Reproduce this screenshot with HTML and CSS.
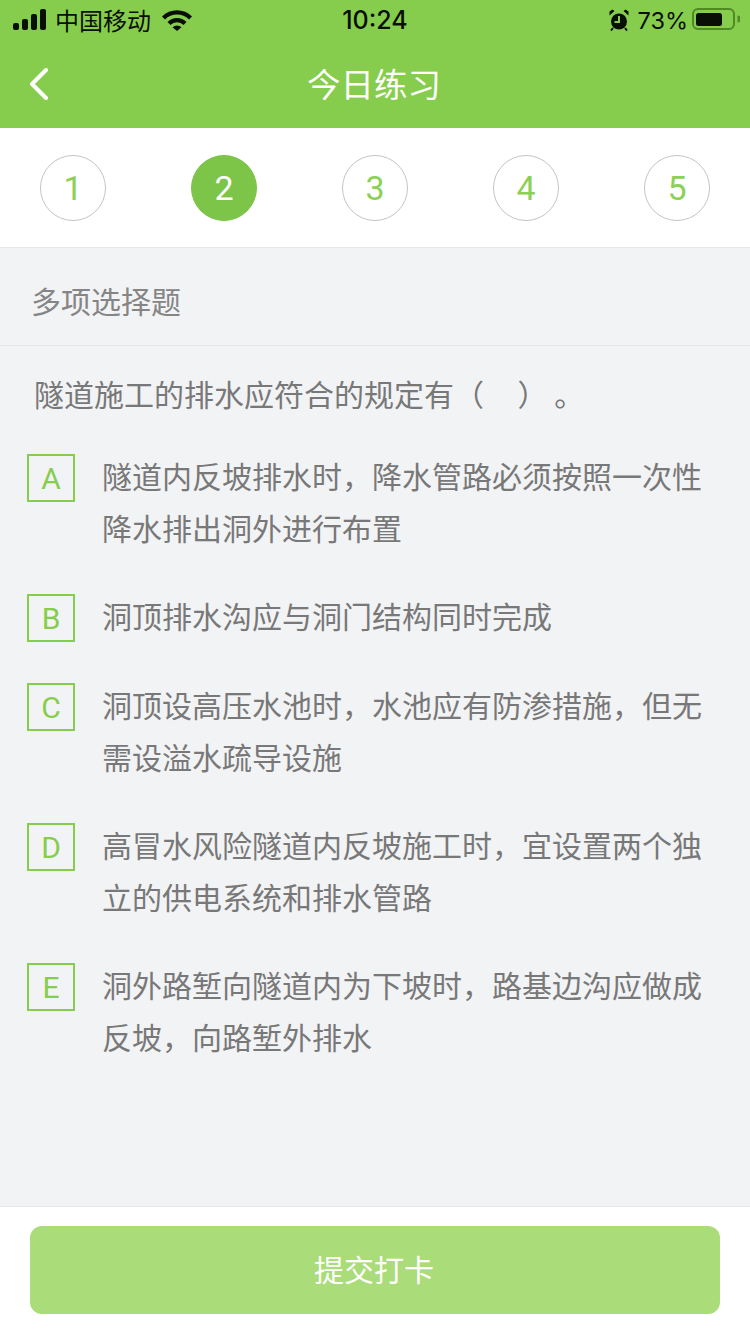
FILE: index.html
```html
<!DOCTYPE html>
<html lang="zh-CN">
<head>
    <meta charset="UTF-8">
    <title>今日练习</title>
    <meta name="viewport" content="width=device-width, initial-scale=1">
    <link rel="stylesheet" href="styles.css">
</head>
<body>
<div class="page">
    <header class="top">
        <div class="status">
            <div class="status-left">
                <svg class="signal" width="34" height="22" viewBox="0 0 34 22">
                    <rect x="0" y="14" width="6" height="7" rx="2"/>
                    <rect x="9" y="10" width="6" height="11" rx="2"/>
                    <rect x="18" y="5" width="6" height="16" rx="2"/>
                    <rect x="27" y="0" width="6" height="21" rx="2"/>
                </svg>
                <span class="carrier">中国移动</span>
                <svg class="wifi" width="30" height="22" viewBox="0 0 30 22">
                    <path d="M0 7.500a21 21 0 0 1 30 0l-3 3a17 17 0 0 0-24 0z"/>
                    <path d="M5.500 13a13.500 13.500 0 0 1 19 0l-3 3a9.300 9.300 0 0 0-13 0z"/>
                    <path d="M10.500 18.300a6.300 6.300 0 0 1 9 0l-4.500 3.700z"/>
                </svg>
            </div>
            <div class="status-time">10:24</div>
            <div class="status-right">
                <svg class="alarm" width="20" height="22" viewBox="0 0 20 22">
                    <circle cx="10" cy="12.500" r="8"/>
                    <path d="M0.500 6.500 5.500 2 3.500 0.500 0.500 2.500z M19.500 6.500 14.500 2 16.500 0.500 19.500 2.500z"/>
                    <path d="M4 19 2 21.500 M16 19 18 21.500" class="alarm-foot"/>
                    <path class="alarm-hand" d="M10 7V13H5.500"/>
                </svg>
                <span class="percent">73%</span>
                <svg class="battery" width="49" height="24" viewBox="0 0 49 24">
                    <rect class="battery-shell" x="2" y="1" width="41" height="20" rx="5"/>
                    <rect x="5" y="5" width="26" height="13" rx="2.500"/>
                    <path class="battery-cap" d="M46.500 7.500a3.500 3.500 0 0 1 0 7z"/>
                </svg>
            </div>
        </div>
        <div class="nav">
            <svg class="back" width="20" height="32" viewBox="0 0 20 32">
                <path d="M17 2 3 16 17 30"/>
            </svg>
            <h1>今日练习</h1>
        </div>
    </header>

    <div class="steps">
        <div class="step">1</div>
        <div class="step active">2</div>
        <div class="step">3</div>
        <div class="step">4</div>
        <div class="step">5</div>
    </div>

    <main class="content">
        <div class="qtype">多项选择题</div>
        <p class="question">隧道施工的排水应符合的规定有（&nbsp;&nbsp;&nbsp;&nbsp;&nbsp;）&nbsp;。</p>
        <div class="options">
            <div class="option">
                <div class="letter">A</div>
                <div class="text">隧道内反坡排水时，降水管路必须按照一次性降水排出洞外进行布置</div>
            </div>
            <div class="option">
                <div class="letter">B</div>
                <div class="text">洞顶排水沟应与洞门结构同时完成</div>
            </div>
            <div class="option">
                <div class="letter">C</div>
                <div class="text">洞顶设高压水池时，水池应有防渗措施，但无需设溢水疏导设施</div>
            </div>
            <div class="option">
                <div class="letter">D</div>
                <div class="text">高冒水风险隧道内反坡施工时，宜设置两个独立的供电系统和排水管路</div>
            </div>
            <div class="option">
                <div class="letter">E</div>
                <div class="text">洞外路堑向隧道内为下坡时，路基边沟应做成反坡，向路堑外排水</div>
            </div>
        </div>
    </main>

    <footer class="bottom">
        <button class="submit">提交打卡</button>
    </footer>
</div>
</body>
</html>
```

FILE: styles.css
```css
* {
    box-sizing: border-box;
}

html, body {
    margin: 0;
    padding: 0;
}

body {
    font-family: "Noto Sans CJK SC", "Liberation Sans", sans-serif;
    background: #f2f3f5;
}

.page {
    width: 750px;
    height: 1334px;
    display: flex;
    flex-direction: column;
    overflow: hidden;
}

.top {
    height: 128px;
    background: #87cd4d;
    flex: none;
}

.status {
    height: 40px;
    display: grid;
    grid-template-columns: 1fr auto 1fr;
    align-items: center;
    padding: 0 13px;
    color: #0a0f05;
}

.status-left, .status-right {
    display: flex;
    align-items: center;
}

.status-right {
    justify-content: flex-end;
}

.signal {
    fill: #0a0f05;
}

.carrier {
    font-size: 24px;
    margin-left: 8px;
    line-height: 30px;
}

.wifi {
    fill: #0a0f05;
    margin-left: 11px;
}

.status-time {
    font-family: Inter, "Liberation Sans", sans-serif;
    font-size: 25px;
    font-weight: 500;
}

.alarm {
    fill: #0a0f05;
}

.alarm-foot {
    fill: none;
    stroke: #0a0f05;
    stroke-width: 2;
}

.alarm-hand {
    fill: none;
    stroke: #87cd4d;
    stroke-width: 2;
}

.percent {
    font-family: Inter, "Liberation Sans", sans-serif;
    font-size: 23.500px;
    margin-left: 9px;
}

.battery {
    fill: #0a0f05;
    margin-left: 3px;
    margin-right: -3px;
}

.battery-shell {
    fill: none;
    stroke: #4f8a25;
    stroke-width: 2;
}

.battery-cap {
    fill: #4f8a25;
}

.nav {
    height: 88px;
    display: flex;
    align-items: center;
    justify-content: center;
    position: relative;
}

.back {
    position: absolute;
    left: 29px;
    top: 28px;
    fill: none;
    stroke: #fff;
    stroke-width: 4;
    stroke-linecap: round;
    stroke-linejoin: round;
}

.nav h1 {
    margin: 0 2px 3px 0;
    font-size: 33.500px;
    font-weight: 400;
    color: #fff;
}

.steps {
    height: 120px;
    flex: none;
    background: #fff;
    border-bottom: 1px solid #e6e7e9;
    display: flex;
    justify-content: space-between;
    align-items: center;
    padding: 0 40px;
}

.step {
    width: 66px;
    height: 66px;
    border-radius: 50%;
    border: 1px solid #c4c4c4;
    display: flex;
    align-items: center;
    justify-content: center;
    font-family: Roboto, "Liberation Sans", sans-serif;
    font-size: 34px;
    color: #8dd056;
}

.step.active {
    background: #7cc548;
    border-color: #7cc548;
    color: #fff;
}

.content {
    flex: 1;
    min-height: 0;
}

.qtype {
    height: 98px;
    padding: 0 31px;
    border-bottom: 1px solid #e6e7e9;
    font-size: 30px;
    color: #858585;
    line-height: 104px;
}

.question {
    margin: 0;
    padding: 25px 34px 0;
    font-size: 30px;
    line-height: 44px;
    color: #787878;
}

.options {
    padding: 34px 27px 0;
}

.option {
    display: flex;
    align-items: flex-start;
    margin-bottom: 36px;
}

.letter {
    width: 48px;
    height: 48px;
    flex: none;
    border: 2px solid #87cd4d;
    color: #87cd4d;
    font-family: Roboto, "Liberation Sans", sans-serif;
    font-size: 30px;
    display: flex;
    align-items: center;
    justify-content: center;
    margin-top: 5px;
}

.text {
    margin-left: 27px;
    width: 610px;
    font-size: 30px;
    line-height: 52px;
    color: #787878;
}

.bottom {
    height: 128px;
    flex: none;
    background: #fff;
    border-top: 1px solid #e6e7e9;
    padding: 19px 30px 0;
}

.submit {
    width: 690px;
    height: 88px;
    border: 0;
    border-radius: 12px;
    background: #aadc79;
    color: #fff;
    font-family: inherit;
    font-size: 30px;
    padding: 0 2px 4px 0;
}
```
